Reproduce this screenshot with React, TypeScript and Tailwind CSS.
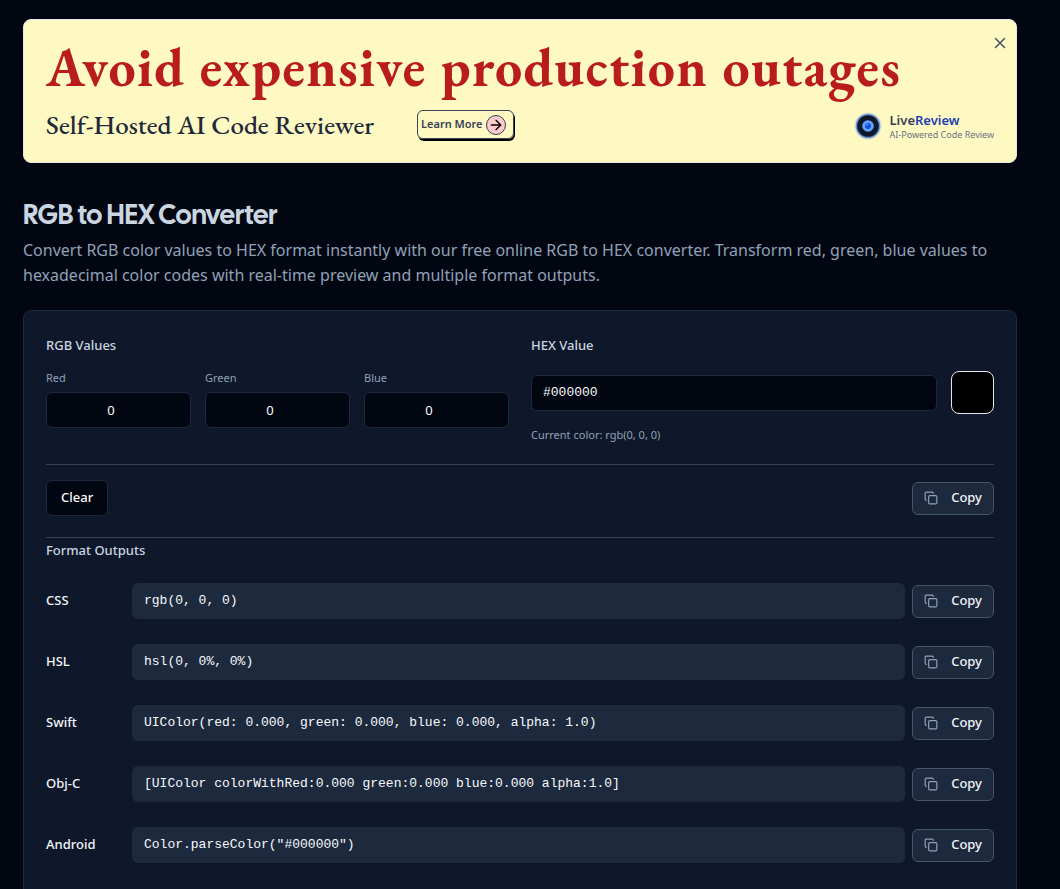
import { useState } from "react";
import { ArrowRight, Copy, X } from "lucide-react";

type Rgb = { red: number; green: number; blue: number };

const channels: { key: keyof Rgb; label: string }[] = [
  { key: "red", label: "Red" },
  { key: "green", label: "Green" },
  { key: "blue", label: "Blue" },
];

function toHex({ red, green, blue }: Rgb) {
  return "#" + [red, green, blue].map((v) => v.toString(16).padStart(2, "0")).join("");
}

function toHsl({ red, green, blue }: Rgb) {
  const [r, g, b] = [red / 255, green / 255, blue / 255];
  const max = Math.max(r, g, b);
  const min = Math.min(r, g, b);
  const d = max - min;
  const l = (max + min) / 2;
  if (d === 0) return `hsl(0, 0%, ${Math.round(l * 100)}%)`;
  const s = d / (1 - Math.abs(2 * l - 1));
  const sector = max === r ? ((g - b) / d + 6) % 6 : max === g ? (b - r) / d + 2 : (r - g) / d + 4;
  return `hsl(${Math.round(sector * 60)}, ${Math.round(s * 100)}%, ${Math.round(l * 100)}%)`;
}

function EyeLogo() {
  return (
    <svg viewBox="0 0 28 28" className="size-7 shrink-0" aria-hidden="true">
      <circle cx="14" cy="14" r="13.5" fill="#60a5fa" opacity="0.25" />
      <circle cx="14" cy="14" r="12.3" fill="#3b6fd0" opacity="0.7" />
      <circle cx="14" cy="14" r="10.8" fill="#0f172a" />
      <circle cx="14" cy="14" r="5.8" fill="#60a5fa" />
      <circle cx="14" cy="14" r="3" fill="#1d4ed8" />
      <circle cx="13" cy="12.4" r="1" fill="#60a5fa" />
    </svg>
  );
}

function Banner() {
  return (
    <section className="relative rounded-lg border border-gray-200 bg-[#fef8c3] px-[22px] pt-[11px] pb-[19px]">
      <h2 className="font-['EB_Garamond','Liberation_Serif',serif] text-[54px] leading-[72px] font-bold tracking-wide whitespace-nowrap text-[#b91c1c]">
        Avoid expensive production outages
      </h2>
      <div className="mt-[3px] flex h-[37px] items-center">
        <p className="w-[371px] font-['EB_Garamond','Liberation_Serif',serif] text-[27px] leading-9 font-medium text-gray-800">
          Self-Hosted AI Code Reviewer
        </p>
        <a
          href="#learn-more"
          className="flex h-[29px] items-center gap-[3px] rounded-md border border-gray-700 pr-[7px] pl-[3px] text-[11px] font-semibold text-gray-700 shadow-[1px_2px_0_0_#000]"
        >
          Learn More
          <span className="flex size-5 items-center justify-center rounded-full border border-gray-700 bg-[#fecaca] text-black">
            <ArrowRight size={16} strokeWidth={2} />
          </span>
        </a>
        <div className="mt-[3px] ml-auto flex items-center gap-2">
          <EyeLogo />
          <div className="pt-px">
            <p className="text-[13px] leading-4 font-semibold text-gray-700">
              Live<span className="text-[#1e40af]">Review</span>
            </p>
            <p className="text-[9px] leading-[14px] text-gray-500">AI-Powered Code Review</p>
          </div>
        </div>
      </div>
      <button type="button" aria-label="Close" className="absolute top-[14px] right-[7px] text-gray-600">
        <X size={18} strokeWidth={2} />
      </button>
    </section>
  );
}

function CopyButton({ value }: { value: string }) {
  return (
    <button
      type="button"
      onClick={() => navigator.clipboard?.writeText(value)}
      className="flex h-[33px] w-[82px] shrink-0 items-center justify-between rounded-md border border-slate-600 bg-slate-800 px-[11px] text-[13px] font-medium text-slate-100"
    >
      <Copy size={14} strokeWidth={2} className="text-slate-400" />
      Copy
    </button>
  );
}

export default function App() {
  const [rgb, setRgb] = useState<Rgb>({ red: 0, green: 0, blue: 0 });
  const hex = toHex(rgb);
  const css = `rgb(${rgb.red}, ${rgb.green}, ${rgb.blue})`;
  const [r, g, b] = [rgb.red, rgb.green, rgb.blue].map((v) => (v / 255).toFixed(3));

  const outputs = [
    { label: "CSS", value: css },
    { label: "HSL", value: toHsl(rgb) },
    { label: "Swift", value: `UIColor(red: ${r}, green: ${g}, blue: ${b}, alpha: 1.0)` },
    { label: "Obj-C", value: `[UIColor colorWithRed:${r} green:${g} blue:${b} alpha:1.0]` },
    { label: "Android", value: `Color.parseColor("${hex}")` },
  ];

  const setHex = (text: string) => {
    const match = /^#?([0-9a-f]{2})([0-9a-f]{2})([0-9a-f]{2})$/i.exec(text);
    if (match) {
      setRgb({ red: parseInt(match[1], 16), green: parseInt(match[2], 16), blue: parseInt(match[3], 16) });
    }
  };

  return (
    <div className="min-h-screen bg-[#020610] pt-[19px] pr-[43px] pb-6 pl-[23px] font-['Noto_Sans',sans-serif] text-slate-300">
      <Banner />

      <header className="mt-[34px]">
        <h1 className="font-['Cal_Sans','Lato',sans-serif] text-[27px] leading-9 font-normal text-slate-300">
          RGB to HEX Converter
        </h1>
        <p className="mt-[5px] text-base leading-[25px] text-slate-400">
          Convert RGB color values to HEX format instantly with our free online RGB to HEX converter. Transform red,
          green, blue values to hexadecimal color codes with real-time preview and multiple format outputs.
        </p>
      </header>

      <main className="mt-[22px] rounded-lg border border-slate-800 bg-[#0f172a] px-[22px] pt-6 pb-12">
        <div className="grid grid-cols-2 gap-[22px]">
          <fieldset>
            <legend className="text-[13px] leading-5 font-medium">RGB Values</legend>
            <div className="mt-[14px] grid grid-cols-3 gap-[14px]">
              {channels.map(({ key, label }) => (
                <div key={key}>
                  <label htmlFor={key} className="block text-[11px] leading-[18px] text-slate-400">
                    {label}
                  </label>
                  <input
                    id={key}
                    type="number"
                    min={0}
                    max={255}
                    value={rgb[key]}
                    onChange={(e) =>
                      setRgb({ ...rgb, [key]: Math.max(0, Math.min(255, parseInt(e.target.value, 10) || 0)) })
                    }
                    className="mt-[5px] h-9 w-full rounded-md border border-slate-800 bg-[#020610] text-center text-[13px] text-slate-50"
                  />
                </div>
              ))}
            </div>
          </fieldset>
          <div>
            <label htmlFor="hex" className="block text-[13px] leading-5 font-medium">
              HEX Value
            </label>
            <div className="mt-4 flex items-center gap-[14px]">
              <input
                id="hex"
                value={hex}
                onChange={(e) => setHex(e.target.value)}
                className="h-9 min-w-0 flex-1 rounded-md border border-slate-800 bg-[#020610] px-[11px] font-['Liberation_Mono',monospace] text-[13px] text-slate-50"
              />
              <div className="size-[43px] rounded-lg border border-gray-200" style={{ backgroundColor: hex }} />
            </div>
            <p className="mt-[13px] text-[11px] leading-4 text-slate-400">Current color: {css}</p>
          </div>
        </div>

        <div className="mt-[21px] flex items-center justify-between border-t border-slate-700 pt-[15px]">
          <button
            type="button"
            onClick={() => setRgb({ red: 0, green: 0, blue: 0 })}
            className="h-9 rounded-md border border-slate-800 bg-[#020610] px-[14px] text-[13px] font-medium text-slate-50"
          >
            Clear
          </button>
          <CopyButton value={hex} />
        </div>

        <section className="mt-[21px] border-t border-slate-700 pt-[2px]">
          <h2 className="text-[13px] leading-5 font-medium">Format Outputs</h2>
          <ul className="mt-[23px] flex flex-col gap-[25px]">
            {outputs.map(({ label, value }) => (
              <li key={label} className="flex items-center">
                <span className="w-[86px] shrink-0 text-[13px] font-medium text-slate-100">{label}</span>
                <code className="mr-[7px] flex h-9 min-w-0 flex-1 items-center rounded-md bg-slate-800 px-3 font-['Liberation_Mono',monospace] text-[13px] text-slate-50">
                  {value}
                </code>
                <CopyButton value={value} />
              </li>
            ))}
          </ul>
        </section>
      </main>
    </div>
  );
}
